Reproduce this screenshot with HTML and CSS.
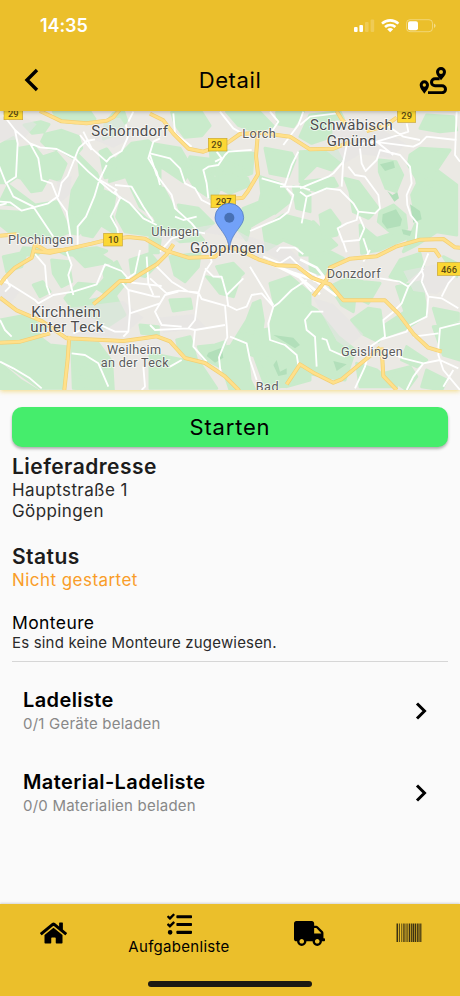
FILE: index.html
```
<!DOCTYPE html>
<html lang="de">
<head>
  <meta charset="UTF-8">
  <meta name="viewport" content="width=device-width, initial-scale=1.0">
  <title>Detail</title>
  <link rel="stylesheet" href="styles.css">
</head>
<body>
  <header>
    <div class="status-bar">
      <span class="time">14:35</span>
      <svg class="status-icons" width="84" height="16" viewBox="0 0 84 16" fill="#fff">
        <rect x="1" y="9" width="3.6" height="5" rx="1"/>
        <rect x="6.4" y="7" width="3.6" height="7" rx="1"/>
        <rect x="12" y="4" width="3.6" height="10" rx="1" opacity=".2"/>
        <rect x="17.6" y="1.5" width="3.6" height="12.5" rx="1" opacity=".2"/>
        <g fill="none" stroke="#fff" stroke-width="2.6">
          <path d="M29 5.6a12 12 0 0 1 16.4 0"/>
          <path d="M32 9a7.6 7.6 0 0 1 10.4 0"/>
        </g>
        <path d="M34.2 11.2a4.6 4.6 0 0 1 6 0l-3 3z"/>
        <rect x="53.5" y="1.7" width="26" height="12" rx="3.5" fill="none" stroke="#fff" opacity=".35"/>
        <rect x="55" y="3.2" width="10" height="9" rx="2"/>
        <path d="M81 5.5v4.5q1.6-.7 1.6-2.25T81 5.5z" opacity=".45"/>
      </svg>
    </div>
    <div class="title-bar">
      <svg class="back" width="16" height="24" viewBox="0 0 16 24"><path d="M13 2L3 12l10 10"/></svg>
      <h1>Detail</h1>
      <svg class="route" width="28" height="28" viewBox="0 0 84 84">
        <path class="line" d="M62 38H48a10.500 10.500 0 0 0 0 21h21a10.500 10.500 0 0 1 0 21H27"/>
        <path fill-rule="evenodd" d="M66 3a15 15 0 0 0-15 15c0 9 9 17 15 25 6-8 15-16 15-25A15 15 0 0 0 66 3zm0 9a6 6 0 1 1 0 12 6 6 0 0 1 0-12z"/>
        <path fill-rule="evenodd" d="M16 43A14 14 0 0 0 2 57c0 10 8 17 14 26 6-9 14-16 14-26a14 14 0 0 0-14-14zm0 9a5 5 0 1 1 0 10 5 5 0 0 1 0-10z"/>
      </svg>
    </div>
  </header>

  <svg class="map" width="460" height="279" viewBox="0 0 1380 837">
    <rect width="1380" height="837" fill="#ebe9e4"/>

    <!-- Wald -->
    <g class="forest">
      <g transform="translate(0 -18)">
        <path d="M72 60l50-10 25 8-15 22-35 5zM135 88l50-12 50 18 10 35-25 30-40-25-35-5-20-20zM0 120l40-22 12 30-5 90-22 15H0zM58 130l42-8 28 34 40-14 30 34-20 50-32-10-22 40-30 4-30-40-28-10zM160 20h110l15 22-60 12-50-8zM235 150l55 55 18 44-40 120-34 18-28-50 10-80 25-45zM300 140l20-8 30 40-15 42-20 4zM345 165l50-50 50-8 35 38v200l-60-40-42-90-50 15zM25 240l80 60 65-10 40 90-60 25-60-85-50-20-42-5zM0 318l90 5 40 70-90-2-40-32zM210 318l45 30-20 40-26-5zM290 250l55 20-10 60 18 60-50-30-25 35-30-6 20-50zM365 280l110 90-30 20-70-10-25-45zM340 25l30-8 10 30-30 40-40 15 5-45zM70 428l60 5-20 17H60zM180 440l110-12 30 10-20 12H200z"/>
      </g>
      <g transform="translate(450 -18)">
        <path d="M65 22h90l25 40-25 30-50 5-30-40zM230 20l100 2 40 42-55 15-50-18zM380 22l80-2-30 45-45-8zM0 115l90 15 35 60-25 40-60-40-40-10zM120 155l60 8 40-10 15 50-50 5 25 40-15 40-60-40-30-50zM180 130l70 10 60 5-5 60-40 15-50-30-30-10zM0 240l40 10 35 65 60 60 25 30-70 5-60-40-30-60zM85 300l60 10 45 45-40 28-50-30zM200 160l80 30 20 50-60 25-40-20zM330 215l60 20 35 50-50 40-50-20 10-40zM280 310l50-20 40 35-70 40-10 40-30-35zM345 130l80 15 10 20-20 50-55-10zM430 245l50 20v55l-40-10zM340 370l60-40 80 20-20 80-60-25-50 30zM0 345l35 28-10 70H0z"/>
      </g>
      <g transform="translate(900 -18)">
        <path d="M30 30l90-10 10 20-40 5 5 50-60 20-35-20zM0 140l110-5 15 30-30 30-45-15-50 50zM10 230l90-10 12 22-65 15-47-12zM135 220l40 10 60 80-30 30-45-20-10-60zM238 165l50 5 20 40-20 50-30-10-20-50zM240 320l40-20 35 30 5 40-50 10-35-30zM330 150l30-20 90 5-40 60 60 45v150l-60-10-60 40-40 20 40-90-15-80 20-40-30-50zM380 30l80 5 10 40-50 5-60-10zM60 330l30-15 30 40-10 35-40 10zM0 370l40-20 70 70-50 30H0zM180 360l50 40 80-25 20 20-90 40-55 10zM345 200l70 40-60 10z"/>
      </g>
      <g transform="translate(0 417)">
        <path d="M10 20L80 5l-15 45-45 15zM100 105l28-10 22 30-30 15zM155 30l50 5 10 60-30 15-25-40zM215 10h80l40 25-80 15zM235 100l60 5-40 50 90-20 30 60-60 40-20-30-70-20-30-40zM310 60l40-25 30 60-40 50-50-30 25-30zM0 210l80-15 50 40-20 20 40 30 50 5-10 125H120L30 350l-30-20zM0 340l60 50 50 30H0zM215 275l80 5 40 55 5 85-120-5zM390 30l60-20 25 30-40 40-40-10zM420 225l55 5v25l-50-5zM240 345l60 10-10 30-60-5z"/>
      </g>
      <g transform="translate(450 417)">
        <path d="M60 20l90-10-5 40-40 45-30-20zM60 150l60-3 5 28-55 8zM200 50l50-10 30 30-30 25-35-15zM170 80l60 15 40-15-20 60-40-10zM310 160l20-8 10 60-10 70-50 30-40-20 50-80zM360 100l60-20 60 50v260l-70 20-60-20-30-70-60-20 20-45 80-20 15-65zM80 270l40-10 20 70-50-20zM0 310l100 20 50 10 50 75H0zM145 290l50-5 30-10-5 80-60-30zM230 290l60-10 10 110 15 30H240l-20-60zM310 310l60 20 60 70-80 20z"/>
      </g>
      <g transform="translate(900 417)">
        <path d="M30 20l60-15 40 20-60 50-40-15zM90 110l50-25 50 10 50 5-35 60-40-20-5 45-35-20zM155 210l50-35 35 5 10 70-15 25-50-25zM0 150l50 30 65 80 50 40-30 90-60-10-75-15zM290 110l75-15 15 100-60 40-70 25 5-35 60-40zM300 30l60-20 10 40-60 50-40-20zM170 340l60 20 60 50H180zM400 175l75 15v20l-60 15zM250 370l80-20 20 30-30 40zM400 230l80-10v110l-50-15zM320 290l60 40-30 20-45-20zM380 360l60 30-15 30-60-10zM430 20l40 20v40z"/>
      </g>
    </g>
    <g class="forest-dark">
      <path d="M1140 160l40-10 5 20-30 10zM1162 240l15 12 15-8 5 18-14 10zM1148 310l40-15 18 30-5 20-40 8-15-20zM1230 280l30 20 5 25-25 10zM1205 355l30 5-5 15-20-5zM820 672l60 8 20 22-15 10-40-25zM820 762l10-15 10 35 20-10 0 18-25 5zM625 725l40-15 5 30-25 15-25-20zM1000 750l40 10-30 20z"/>
    </g>
    <!-- Siedlungen -->
    <g class="town">
      <path d="M0 20l60-10 50 30-40 45-70 5zM270 30l90-10 40 60-60 30-70-30zM450 375l70 20 100-30 110 20 170 100 30-10-60-60-130-40-70-40-110 20zM210 590l160-20 60 50-70 60-130-10zM1000 50l120-10 100 60-50 40-90-10-50 30-50-40zM470 620l110-10 40 40-130 15zM940 560l60 20 90 90-50 40-30-20zM0 510l60 30-30 40-30-10zM1210 480l100-20 60 40-60 50-70-10zM170 210l45-15-5 55-30 25z"/>
    </g>

    <!-- Nebenstrassen -->
    <g class="road">
      <g transform="translate(0 -18)">
        <path d="M10 30l35 45 45 40 25 45 10 65 30 10 20 50 25 35 12 80M45 75l8 40-5 100-30 20-18-45-15-40M20 235l20 40 60 30 40 60 20 30M0 290l30 2 35 25 80-22 30-22 10-40 18-20 30-75 5-10 22-20 25-5M90 115l30 12 50 5 55 28 40 40 70 60 55 35 40 45 40 20M20 295L0 300M250 80l25 50 45 40 10-12 35-20 18-40-5-40M320 180l-22 45-15 50-25 60-25 30v60M300 225l50 30-5 5 15 20-28 55 20 35 5 30M345 240l50 5 35 60 30 45M480 240l-10-40-25-40 15-50 20-10M385 50l15-30M275 135L240 90"/>
      </g>
      <g transform="translate(450 -18)">
        <path d="M70 25l5 60 50 40M210 20l40 50 35 20M360 20l25 30-20 30M0 150l20 60 45 60 10 40 50 45 20 25M0 145l60 15 30 30 15 45 30 15 20 35 50 25M175 280l-5-45-10-40 15-10 30-5 20-30 10-10 70-5M200 140l15 20-20 10M335 220l70 20 20-60 20-40M390 245l60 0 30 10M410 250l20 20-15 50-25 20-90 38M380 440l10-12h45l25 20M140 335l-40 10-25-10M30 440l35-40 70-20 30 5M460 20l-15 40-45 60"/>
      </g>
      <g transform="translate(900 -18)">
        <path d="M0 250l35-15 50-20 15-10 30-35 10-50M0 260l20 15 60-25 40 5 40 40 15 25 50 5 15-15-5-40-40-55-30-5-20-25M20 275l-15 80M195 200l35-35 10-30 60 15 30 35 5 50-15 35 2 30 10 30 20 25-5 50M180 130l5 45 10 20M130 165l-5 80M175 320l-5 25-30 10-27 15 15 40 50-5 15-35-15-35M190 400l15 45M130 412l10 30M160 120l70-10 50-15 45-15-5-25M220 110l120 15 20-10 20-20 90 10M230 110l50 40M470 20l-5 130 15 20M260 60l50 35 50 10M0 60l30-25 80-10"/>
      </g>
      <g transform="translate(0 417)">
        <path d="M105 12l30 35 5 60 10 28M0 90l25 10 80 50 10 10 45-25 60-10 70-22 25-60 50 20 30 35 90 10M200 5l15 40-10 30 15 60M15 80l15 30-15 15M360 90l25 30 5 65-5 60-15 15M385 120l80 20 15 0M440 20l5 80 15 35M390 190l90-30M0 210l15 30 20 20M0 335l40 20 50 30 35 30M215 310l40 5 40 25 30 70M385 245l-40 0-55-25-70 30M420 0l-15 70-30 20M430 350l5 60-10 10"/>
      </g>
      <g transform="translate(450 417)">
        <path d="M20 50l45 45 50 30 30 5 20-65 20-30-5-20M0 85l50 45 35-8 60 5 10 20 70 20 5 60 2 35-5 10-20 50 5 50M145 130l-10 80-20 25-100 5-15-15M85 125L45 135l-30 50 20 40 60 5M115 235l20 5-5 50 40 45M135 240l90-15M165 55l25 25 25 0 15 55 5 35M230 165l30 15 30-10 15-35 30-5 35 40 15-10 40-40 15-10 30-20M370 170l-15 50 5 50 45 15 35 30 5 30M240 260l50 20 10 50 20 60M300 50l30 50 40 65M230 135l50-50M340 20l50 20 30-20 50 50M60 350l35-20"/>
      </g>
      <g transform="translate(900 417)">
        <path d="M0 55l45 20 35 40M0 85l35 40M70 185H35l-20 25 5 30 25 20 5 90M65 265l15 5 10 30 45 20M240 85l60 10 25 15-20 50-30 30-25 20 5 50-15 10M240 270l80-25 10-20 50-25 5-60-20-45 5-20-5-15 20-50M240 270l-30 20-15 60-30 65M385 140l40 5 50 30M425 140l20-40 30-35M480 220l-60 15-5 60 0 20 15 45 50 60M340 260l75-10M250 300l60 25 60 15 50-10 55 25M370 340l-30 40-20 40M460 360l-30 50M190 35L210 0M325 110l30-35 15-20"/>
      </g>
    </g>
    <g class="road-major">
      <path d="M900 475l110 80M760 440l120 45 60 20 30-10-20-25-50-25M800 450l100 50 60 50M940 510l40-10"/>
    </g>

    <!-- Bundesstrassen -->
    <g id="highways">
      <path id="b29" d="M120 0l65 31 75 6 60-8 20-10 18-22M450 8l40 20 30 40 45 45 45 9 70-25 40-28 60-4 90 12 60 38 70-2 50-20M1100 60l55-15 35-25M1010 0l15 25 15 15"/>
      <path id="b297" d="M773 75l-5 60 6 55-30 50-15 20-60 6"/>
      <path id="b10" d="M0 374l50-4M105 400l35 20 55-4 80-18 40-10 70-10 50 5 60 35 70 22 80-3 35-30 40 10 55 28 55 18 60 2 45 35 55 20 40 48 60 0h65l40 40 45 60 45 42 40 12M105 400l-10 40-50 30-30 30-15 20"/>
      <path id="b466" d="M940 555l40-50 10-35 60-27 80-7 60-30 70-20 70-2 35 25 75 5M1255 417l50 0 15 22"/>
      <path id="a8" d="M0 560l50 38 75 32 75 52 170 8 60-8 40-6 40 15 45 50 60 15 60 40 40 40 20 45M0 695l60-3 90-25M208 675l-5 70-10 92M280 580l30-25 50-45 30 0 30-20 50-30 30-30 20-30M100 420l50 5 50-10M860 820l40-60 40 25 60 30 25-10 60-50 55-45M1145 710l5 85 40 42"/>
    </g>
    <use href="#highways" class="hw-edge"/>
    <use href="#highways" class="hw"/>

    <g class="shield">
      <rect x="12" y="-14" width="56" height="40"/><text x="40" y="19">29</text>
      <rect x="625" y="82" width="56" height="38"/><text x="650" y="112">29</text>
      <rect x="1193" y="-4" width="54" height="38"/><text x="1220" y="25">29</text>
      <rect x="311" y="367" width="56" height="38"/><text x="340" y="397">10</text>
      <rect x="633" y="252" width="74" height="38"/><text x="671" y="281">297</text>
      <rect x="1312" y="455" width="74" height="38"/><text x="1347" y="485">466</text>
    </g>
    <g class="labels">
      <text class="big" x="274" y="75" textLength="230">Schorndorf</text>
      <text x="727" y="80" textLength="100">Lorch</text>
      <text class="big" x="930" y="57" textLength="248">Schwäbisch</text>
      <text class="big" x="980" y="104" textLength="149">Gmünd</text>
      <text x="24" y="399" textLength="196">Plochingen</text>
      <text x="454" y="374" textLength="143">Uhingen</text>
      <text class="big" x="570" y="427" textLength="224">Göppingen</text>
      <text x="980" y="500" textLength="162">Donzdorf</text>
      <text class="big" x="94" y="617" textLength="208">Kirchheim</text>
      <text class="big" x="91" y="664" textLength="219">unter Teck</text>
      <text x="321" y="728" textLength="162">Weilheim</text>
      <text x="302" y="768" textLength="204">an der Teck</text>
      <text x="1023" y="734" textLength="185">Geislingen</text>
      <text x="767" y="839" textLength="69">Bad</text>
    </g>
    <g class="pin">
      <path d="M688 417c-3-30-12-43-26-62-10-14-17-23-17-35a43 43 0 0 1 86 0c0 12-7 21-17 35-14 19-23 32-26 62z"/>
      <circle cx="688" cy="320" r="15"/>
    </g>
  </svg>

  <main>
    <button class="start">Starten</button>
    <h2>Lieferadresse</h2>
    <p class="address">Hauptstraße 1<br>Göppingen</p>
    <h2>Status</h2>
    <p class="state">Nicht gestartet</p>
    <h3>Monteure</h3>
    <p class="fitters">Es sind keine Monteure zugewiesen.</p>
    <ul>
      <li>
        <div>
          <h4>Ladeliste</h4>
          <p>0/1 Geräte beladen</p>
        </div>
        <svg width="12" height="20" viewBox="0 0 12 20"><path d="M2 2.500L9.500 10 2 17.500"/></svg>
      </li>
      <li>
        <div>
          <h4>Material-Ladeliste</h4>
          <p>0/0 Materialien beladen</p>
        </div>
        <svg width="12" height="20" viewBox="0 0 12 20"><path d="M2 2.500L9.500 10 2 17.500"/></svg>
      </li>
    </ul>
  </main>

  <footer>
    <nav>
      <a class="home">
        <svg width="27" height="24" viewBox="0 0 576 512"><path d="M280.370 148.260L96 300.110V464a16 16 0 0 0 16 16l112.060-.29a16 16 0 0 0 15.920-16V368a16 16 0 0 1 16-16h64a16 16 0 0 1 16 16v95.640a16 16 0 0 0 16 16.050L464 480a16 16 0 0 0 16-16V300L295.670 148.260a12.190 12.190 0 0 0-15.300 0zM571.600 251.470L488 182.560V44.050a12 12 0 0 0-12-12h-56a12 12 0 0 0-12 12v72.610L318.470 43a48 48 0 0 0-61 0L4.340 251.470a12 12 0 0 0-1.600 16.900l25.500 31A12 12 0 0 0 45.150 301l235.220-193.740a12.190 12.190 0 0 1 15.300 0L530.900 301a12 12 0 0 0 16.900-1.600l25.500-31a12 12 0 0 0-1.700-16.930z"/></svg>
      </a>
      <a class="tasks">
        <svg width="25" height="25" viewBox="0 0 512 512"><path d="M139.610 35.500a12 12 0 0 0-17 0L58.930 98.810l-22.700-22.120a12 12 0 0 0-17 0L3.530 92.410a12 12 0 0 0 0 17l47.590 47.400a12.780 12.780 0 0 0 17.610 0l15.590-15.620L156.520 69a12.090 12.090 0 0 0 .09-17zm0 159.190a12 12 0 0 0-17 0l-63.680 63.720-22.700-22.100a12 12 0 0 0-17 0L3.530 252a12 12 0 0 0 0 17L51 316.500a12.770 12.770 0 0 0 17.600 0l15.700-15.690 72.200-72.220a12 12 0 0 0 .09-16.900zM64 368a48 48 0 0 0 0 96 48 48 0 0 0 0-96zm432 16H208a16 16 0 0 0-16 16v32a16 16 0 0 0 16 16h288a16 16 0 0 0 16-16v-32a16 16 0 0 0-16-16zm0-320H208a16 16 0 0 0-16 16v32a16 16 0 0 0 16 16h288a16 16 0 0 0 16-16V80a16 16 0 0 0-16-16zm0 160H208a16 16 0 0 0-16 16v32a16 16 0 0 0 16 16h288a16 16 0 0 0 16-16v-32a16 16 0 0 0-16-16z"/></svg>
        <span>Aufgabenliste</span>
      </a>
      <a class="truck">
        <svg width="31" height="25" viewBox="0 0 640 512"><path d="M624 352h-16V243.900c0-12.700-5.100-24.900-14.100-33.900L494 110.100c-9-9-21.200-14.100-33.900-14.100H416V48c0-26.500-21.500-48-48-48H48C21.500 0 0 21.500 0 48v320c0 26.500 21.500 48 48 48h16c0 53 43 96 96 96s96-43 96-96h128c0 53 43 96 96 96s96-43 96-96h48c8.800 0 16-7.200 16-16v-32c0-8.800-7.200-16-16-16zM160 464c-26.500 0-48-21.500-48-48s21.500-48 48-48 48 21.500 48 48-21.500 48-48 48zm320 0c-26.500 0-48-21.500-48-48s21.500-48 48-48 48 21.500 48 48-21.500 48-48 48zm80-208H416V144h44.100l99.900 99.900V256z"/></svg>
      </a>
      <a class="barcode">
        <svg width="26" height="20" viewBox="0 0 26 20">
          <path d="M.5.500h1.600v18.500H.5zM3 .5h.8v18.500H3zM5.400.5h.8v18.500h-.8zM7.300.5h1.300v18.500H7.300zM9.600.5h.9v18.500h-.9zM11.400.5h.9v18.500h-.9zM13 .5h1.200v18.500H13zM14.900.5h1v18.500h-1zM16.500.5H18v18.500h-1.500zM18.600.5h1.600v18.500h-1.600zM20.900.5h1v18.500h-1zM22.400.5h1.200v18.500h-1.200zM24.200.5h1.200v18.500h-1.200z"/>
        </svg>
      </a>
    </nav>
    <div class="indicator"></div>
  </footer>
</body>
</html>
```

FILE: styles.css
```
* {
  box-sizing: border-box;
}
body {
  font-family: Inter, "Liberation Sans", sans-serif;
  margin: 0;
  height: 996px;
  display: flex;
  flex-direction: column;
  background-color: #fafafa;
  color: #000;
}
h1, h2, h3, h4, p, ul {
  margin: 0;
  padding: 0;
}
svg {
  display: block;
}
header {
  position: relative;
  z-index: 1;
  height: 111px;
  flex: none;
  background-color: #ebbf2b;
  box-shadow: 0 1px 4px rgba(0, 0, 0, 0.25);
}
.status-bar {
  display: flex;
  justify-content: space-between;
  align-items: center;
  height: 50px;
  padding: 1px 24px 0 40px;
}
.time {
  color: #fff;
  font-size: 18px;
  font-weight: 600;
  letter-spacing: -0.1px;
}
.status-icons {
  margin-right: -1px;
}
.title-bar {
  display: grid;
  grid-template-columns: 60px 1fr 60px;
  align-items: center;
  height: 60px;
}
.title-bar h1 {
  font-size: 22px;
  font-weight: 400;
  text-align: center;
  letter-spacing: 0.6px;
}
.back {
  margin-left: 24px;
  fill: none;
  stroke: #000;
  stroke-width: 3.4;
}
.route {
  margin-left: 19px;
}
.route .line {
  fill: none;
  stroke: #000;
  stroke-width: 9;
}

.map {
  flex: none;
  margin-bottom: 17px;
  box-shadow: 0 1px 5px rgba(235, 191, 43, 0.6);
}
.forest {
  fill: #c9ebcb;
  stroke: #c9ebcb;
  stroke-width: 9;
  stroke-linejoin: round;
}
.forest-dark {
  fill: #b2dfba;
}
.town {
  fill: #e6e5e4;
  opacity: 0.6;
}
.road, .road-major {
  fill: none;
  stroke: #fff;
  stroke-width: 5.5;
  stroke-linejoin: round;
}
.road-major {
  stroke-width: 8;
}
#highways {
  fill: none;
  stroke-linejoin: round;
}
.hw-edge {
  stroke: #f3cf73;
  stroke-width: 12;
}
.hw {
  stroke: #ffe08a;
  stroke-width: 8;
}
.shield rect {
  fill: #fbd733;
  stroke: #c9a634;
  stroke-width: 2;
}
.shield text {
  font: 500 28px Roboto, sans-serif;
  text-anchor: middle;
  fill: #5b4a12;
}
.labels text {
  font: 38px Roboto, sans-serif;
  fill: #5c5c5c;
  stroke: #fff;
  stroke-width: 5;
  stroke-opacity: 0.75;
  paint-order: stroke;
}
.labels .big {
  font-size: 45px;
  fill: #4d4d4d;
}
.pin path {
  fill: #72a1f8;
  stroke: #4a72b8;
  stroke-width: 2;
}
.pin circle {
  fill: #4770b4;
}

main {
  flex: 1;
  padding: 0 12px;
}
.start {
  display: block;
  width: 100%;
  height: 40px;
  padding: 0;
  border: none;
  border-radius: 10px;
  background-color: #45ed6c;
  box-shadow: 0 2px 3px rgba(0, 0, 0, 0.3);
  color: #000;
  font-family: inherit;
  font-size: 22px;
  font-weight: 400;
  letter-spacing: 0.8px;
}
h2 {
  color: #1c1c1c;
  font-size: 21px;
  font-weight: 600;
  line-height: 26px;
  letter-spacing: 0.45px;
}
.start + h2 {
  margin-top: 7px;
}
.address {
  margin: 0 0 22px;
  color: #2a2a2a;
  font-size: 17px;
  line-height: 21px;
  letter-spacing: 0.4px;
}
.state {
  color: #f99d28;
  font-size: 17px;
  line-height: 21px;
  letter-spacing: 0.45px;
}
h3 {
  margin-top: 21px;
  font-size: 17.5px;
  font-weight: 400;
  line-height: 22px;
  letter-spacing: 0.4px;
}
.fitters {
  margin-top: -1px;
  padding-bottom: 9px;
  border-bottom: 1px solid #d6d6d6;
  color: #2a2a2a;
  font-size: 15px;
  line-height: 19px;
  letter-spacing: 0.18px;
}
ul {
  list-style: none;
  padding-top: 8px;
}
li {
  display: flex;
  justify-content: space-between;
  align-items: center;
  height: 82px;
  padding: 0 21px 0 11px;
}
h4 {
  margin-top: -1px;
  font-size: 20px;
  font-weight: 600;
  line-height: 27px;
  letter-spacing: 0.4px;
}
li p {
  color: #888;
  font-size: 15px;
  line-height: 20px;
  letter-spacing: 0.22px;
}
li svg {
  fill: none;
  stroke: #000;
  stroke-width: 3;
}

footer {
  height: 92px;
  flex: none;
  background-color: #ebbf2b;
  box-shadow: 0 -1px 2px rgba(0, 0, 0, 0.15);
}
nav {
  display: grid;
  grid-template-columns: 106px 146px 114px 1fr;
  height: 77px;
}
nav a {
  display: flex;
  flex-direction: column;
  align-items: center;
  padding-top: 17px;
}
nav .tasks {
  padding-top: 8px;
  font-size: 15px;
  letter-spacing: 0.3px;
}
.barcode svg {
  margin: 2px 9px 0 0;
  fill: #3d3212;
}
.indicator {
  width: 164px;
  height: 6px;
  margin: 0 auto;
  border-radius: 3px;
  background-color: #1c1a12;
}
```
